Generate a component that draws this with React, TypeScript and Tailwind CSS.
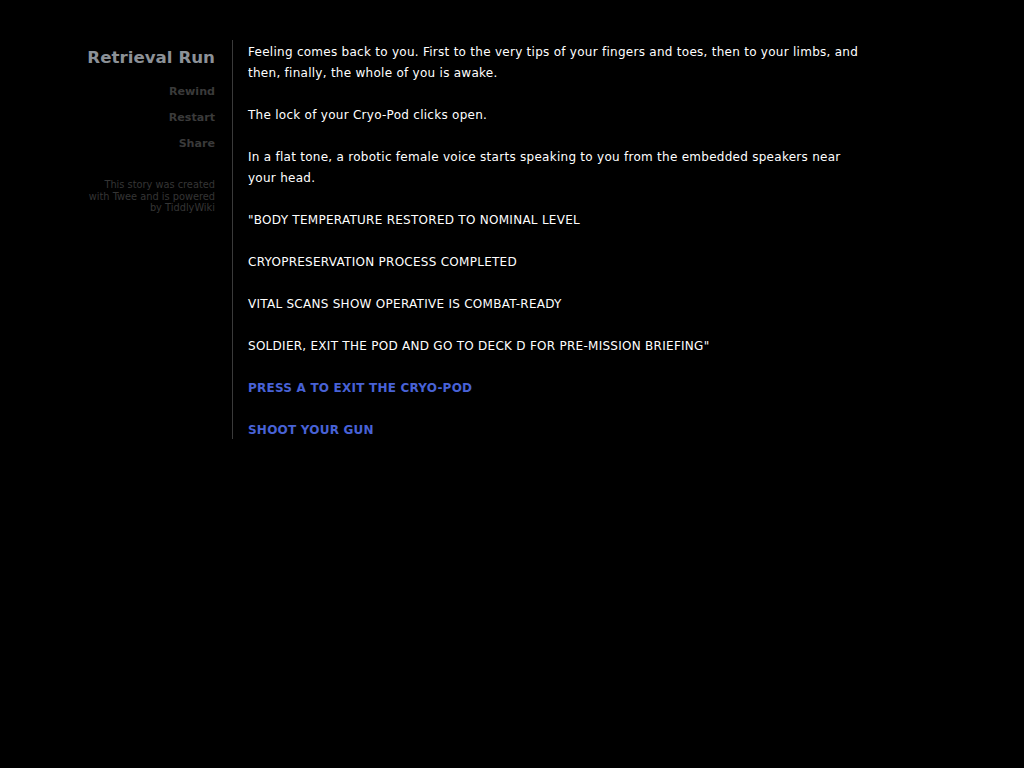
import React from "react";

export default function App() {
  const font = { fontFamily: '"DejaVu Sans", Verdana, sans-serif' };
  return (
    <div className="min-h-[768px] w-full bg-black" style={font}>
      <div className="flex pt-[40px]">
        <div className="w-[215px] shrink-0 text-right pt-[6px]">
          <div className="text-[16.7px] leading-[22px] font-bold text-[#8c9197]">Retrieval Run</div>
          <div className="mt-[11px] flex flex-col text-[11.1px] font-bold text-[#3a3a3a]">
            <span className="leading-[26px]">Rewind</span>
            <span className="leading-[26px]">Restart</span>
            <span className="leading-[26px]">Share</span>
          </div>
          <div className="mt-[22px] text-[9.8px] leading-[11.5px] text-[#353535]">
            This story was created<br />with Twee and is powered<br />by TiddlyWiki
          </div>
        </div>
        <div className="ml-[17px] border-l border-[#3a3a3a] pl-[15px]">
          <div className="w-[620px] pt-[2px] -mb-[2px] text-[12px] leading-[21px] tracking-[0.27px] text-white flex flex-col gap-[21px]">
            <p>Feeling comes back to you. First to the very tips of your fingers and toes, then to your limbs, and then, finally, the whole of you is awake.</p>
            <p>The lock of your Cryo-Pod clicks open.</p>
            <p>In a flat tone, a robotic female voice starts speaking to you from the embedded speakers near your head.</p>
            <p>"BODY TEMPERATURE RESTORED TO NOMINAL LEVEL</p>
            <p>CRYOPRESERVATION PROCESS COMPLETED</p>
            <p>VITAL SCANS SHOW OPERATIVE IS COMBAT-READY</p>
            <p>SOLDIER, EXIT THE POD AND GO TO DECK D FOR PRE-MISSION BRIEFING"</p>
            <p className="font-bold tracking-[0.22px] text-[#4862d6]">PRESS A TO EXIT THE CRYO-POD</p>
            <p className="font-bold tracking-[0.22px] text-[#4862d6]">SHOOT YOUR GUN</p>
          </div>
        </div>
      </div>
    </div>
  );
}
